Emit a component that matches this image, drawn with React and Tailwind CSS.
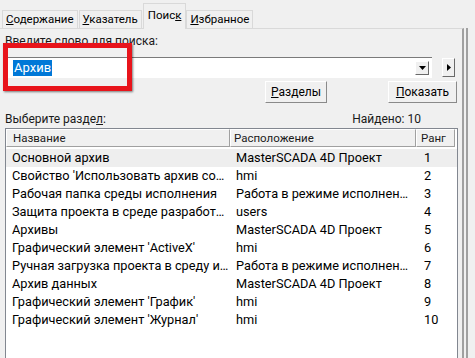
import React from 'react';

const rows = [
  ['Основной архив', 'MasterSCADA 4D Проект', '1'],
  ["Свойство 'Использовать архив со…", 'hmi', '2'],
  ['Рабочая папка среды исполнения', 'Работа в режиме исполнен…', '3'],
  ['Защита проекта в среде разработ…', 'users', '4'],
  ['Архивы', 'MasterSCADA 4D Проект', '5'],
  ["Графический элемент 'ActiveX'", 'hmi', '6'],
  ['Ручная загрузка проекта в среду и…', 'Работа в режиме исполнен…', '7'],
  ['Архив данных', 'MasterSCADA 4D Проект', '8'],
  ["Графический элемент 'График'", 'hmi', '9'],
  ["Графический элемент 'Журнал'", 'hmi', '10'],
];

function Tab({ children, active }) {
  if (active) {
    return (
      <div className="relative z-10 mb-[-1px] h-[26px] bg-[#f0f0f0] border border-b-0 border-[#d9d9d9] px-[4px] pt-[3px] text-[11.5px] leading-[16px] text-black">
        {children}
      </div>
    );
  }
  return (
    <div className="h-[18px] border border-b-0 border-[#d9d9d9] bg-[#f0f0f0] px-[3px] text-[11.5px] leading-[16px] text-black mr-[1px]">
      {children}
    </div>
  );
}

function Btn({ children, className }) {
  return (
    <div className={`h-[22px] flex items-center justify-center border border-t-white border-l-white border-r-[#8a8a8a] border-b-[#8a8a8a] bg-[#f0f0f0] text-[12px] text-black ${className}`}>
      {children}
    </div>
  );
}

export default function App() {
  return (
    <div
      className="relative w-[475px] h-[358px] overflow-hidden bg-[#f0f0f0] text-black"
      style={{ fontFamily: 'Roboto, "Noto Sans", sans-serif' }}
    >
      {/* tabs */}
      <div className="flex items-end h-[28px] pl-[2px]">
        <Tab>
          <span className="underline">С</span>одержание
        </Tab>
        <Tab>
          <span className="underline">У</span>казатель
        </Tab>
        <Tab active>
          Поис<span className="underline">к</span>
        </Tab>
        <Tab>
          <span className="underline">И</span>збранное
        </Tab>
      </div>

      <div className="flex">
        {/* panel */}
        <div className="w-[464px] h-[330px] border-t border-[#d9d9d9] border-r-2 border-r-[#a0a0a0] pl-[5px] pr-[4px]">
          <div className="pt-[4px] h-[28px] text-[12px] leading-[16px] text-[#1a1a1a]">
            Введите слово для поиска:
          </div>

          <div className="flex items-center">
            <div className="w-[427px] h-[21px] bg-white border-t border-t-[#7a7a7a] border-l border-l-[#7a7a7a] flex items-center pl-[7px] pr-[3px]">
              <span className="bg-[#0078d7] text-white text-[13px] leading-[16px] px-[1px]">Архив</span>
              <div className="flex-1" />
              <div className="w-[14px] h-[14px] border border-t-white border-l-white border-r-[#696969] border-b-[#696969] bg-[#f0f0f0] flex items-center justify-center">
                <svg width="7" height="4" viewBox="0 0 7 4">
                  <path d="M0 0h7L3.5 4z" fill="#000" />
                </svg>
              </div>
            </div>
            <div className="ml-[10px] w-[13px] h-[19px] border border-t-white border-l-white border-r-[#696969] border-b-[#696969] bg-[#f0f0f0] flex items-center justify-center">
              <svg width="4" height="7" viewBox="0 0 4 7">
                <path d="M0 0v7l4-3.5z" fill="#000" />
              </svg>
            </div>
          </div>

          <div className="flex mt-[3px] h-[22px]">
            <Btn className="ml-[260px] w-[62px]">
              <span className="underline">Р</span>азделы
            </Btn>
            <Btn className="ml-[61px] w-[69px]">
              <span className="underline">П</span>оказать
            </Btn>
          </div>

          <div className="flex items-center h-[16px] mt-[8px] text-[12px] leading-[16px] text-[#1a1a1a]">
            <span>
              Выберите разде<span className="underline">л</span>:
            </span>
            <span className="ml-auto mr-[37px]">Найдено: 10</span>
          </div>

          {/* list */}
          <div className="mt-[1px] w-[453px] h-[240px] bg-white border border-[#828790]">
            <div className="flex h-[18px] text-[11.5px] leading-[16px] text-[#1a1a1a] bg-[#f0f0f0]">
              <div className="w-[224px] border border-t-white border-l-white border-r-[#a0a0a0] border-b-[#a0a0a0] pl-[6px]">Название</div>
              <div className="w-[186px] border border-t-white border-l-white border-r-[#a0a0a0] border-b-[#a0a0a0] pl-[3px]">Расположение</div>
              <div className="w-[39px] border border-t-white border-l-white border-r-[#a0a0a0] border-b-[#a0a0a0] pl-[4px]">Ранг</div>
              <div className="flex-1 bg-white" />
            </div>
            <div className="pt-[2px]">
              {rows.map((r, i) => (
                <div
                  key={i}
                  className={`flex h-[18px] items-center text-[12.75px] whitespace-nowrap ${i === 0 ? 'bg-[#eeeeee]' : ''}`}
                >
                  <div className="w-[230px] shrink-0 pl-[6px] overflow-hidden">{r[0]}</div>
                  <div className="w-[180px] shrink-0 overflow-hidden">{r[1]}</div>
                  <div className="w-[39px] shrink-0 pl-[8px]">{r[2]}</div>
                </div>
              ))}
            </div>
          </div>
        </div>
        <div className="ml-[2px] w-[2px] h-[330px] bg-[#a0a0a0]" />
      </div>

      {/* red highlight frame */}
      <div className="absolute left-[3px] top-[43px] w-[129px] h-[48px] border-[5px] border-[#e8141b] shadow-[1px_1px_2px_rgba(0,0,0,0.5)]" />
    </div>
  );
}
